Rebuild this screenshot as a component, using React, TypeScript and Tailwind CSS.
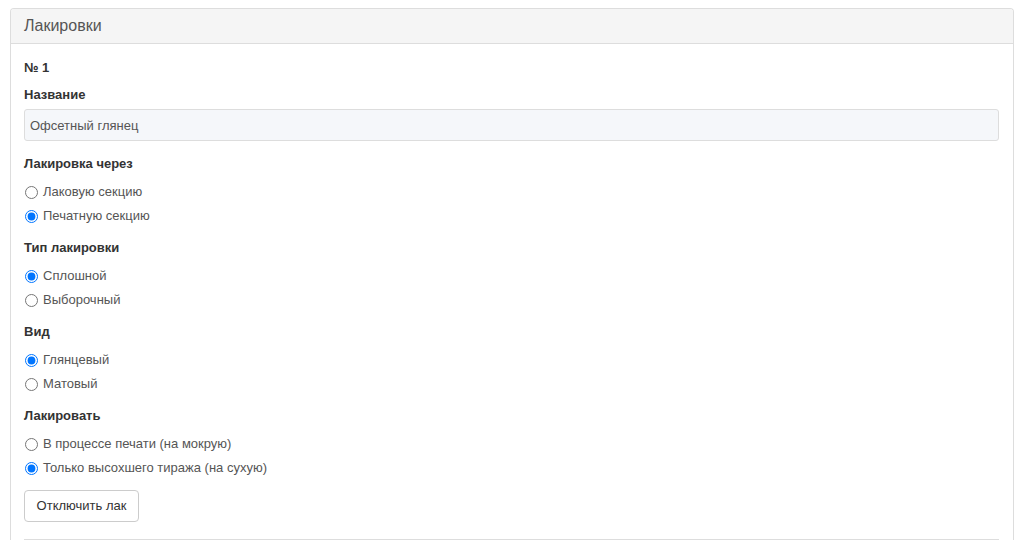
import React, { useState } from 'react';

type Option = { value: string; label: string };

interface RadioGroupProps {
  title: string;
  name: string;
  options: Option[];
  value: string;
  onChange: (v: string) => void;
}

// Группа радиокнопок с заголовком
const RadioGroup: React.FC<RadioGroupProps> = ({ title, name, options, value, onChange }) => (
  <div className="mt-[11px]">
    <div className="text-[13px] leading-[18px] font-bold text-[#333]">{title}</div>
    <div className="mt-[7px]">
      {options.map((o) => (
        <label key={o.value} className="flex items-center h-6 cursor-pointer">
          <input
            type="radio"
            name={name}
            checked={value === o.value}
            onChange={() => onChange(o.value)}
            className="m-0 ml-[1px] w-[13px] h-[13px] accent-[#0075ff]"
          />
          <span className="ml-[5px] text-[13px] text-[#555]">{o.label}</span>
        </label>
      ))}
    </div>
  </div>
);

export default function App() {
  const [via, setVia] = useState('print');
  const [type, setType] = useState('solid');
  const [kind, setKind] = useState('gloss');
  const [when, setWhen] = useState('dry');

  return (
    <div className="bg-white min-h-screen pt-2 px-[10px]" style={{ fontFamily: '"Liberation Sans", Arial, sans-serif' }}>
      <div className="border border-[#ddd] rounded-t-[4px] rounded-b-none border-b-0 w-[1004px]">
        <div className="bg-[#f5f5f5] border-b border-[#ddd] h-[35px] flex items-center px-[13px] rounded-t-[3px]">
          <h3 className="text-[16px] text-[#555]">Лакировки</h3>
        </div>

        <div className="px-[13px] pt-[15px]">
          <div className="text-[13px] leading-[18px] font-bold text-[#333]">№ 1</div>

          <div className="mt-[9px] text-[13px] leading-[18px] font-bold text-[#333]">Название</div>
          <input
            type="text"
            readOnly
            value="Офсетный глянец"
            className="mt-[5px] block w-[975px] h-[32px] px-[5px] bg-[#f5f7fa] border border-[#ddd] rounded-[3px] text-[13px] text-[#555] outline-none"
            style={{ fontFamily: '"Liberation Sans", Arial, sans-serif' }}
          />

          <div className="pt-[3px]">
            <RadioGroup
              title="Лакировка через"
              name="via"
              value={via}
              onChange={setVia}
              options={[
                { value: 'lac', label: 'Лаковую секцию' },
                { value: 'print', label: 'Печатную секцию' },
              ]}
            />
          </div>
          <RadioGroup
            title="Тип лакировки"
            name="type"
            value={type}
            onChange={setType}
            options={[
              { value: 'solid', label: 'Сплошной' },
              { value: 'spot', label: 'Выборочный' },
            ]}
          />
          <RadioGroup
            title="Вид"
            name="kind"
            value={kind}
            onChange={setKind}
            options={[
              { value: 'gloss', label: 'Глянцевый' },
              { value: 'matte', label: 'Матовый' },
            ]}
          />
          <RadioGroup
            title="Лакировать"
            name="when"
            value={when}
            onChange={setWhen}
            options={[
              { value: 'wet', label: 'В процессе печати (на мокрую)' },
              { value: 'dry', label: 'Только высохшего тиража (на сухую)' },
            ]}
          />

          <button
            type="button"
            className="mt-[10px] h-[32px] w-[115px] border border-[#ccc] rounded-[4px] bg-white text-[13px] text-[#333] hover:bg-[#e6e6e6]"
          >
            Отключить лак
          </button>

          <div className="mt-[17px] w-[975px] border-t border-[#ddd]" />
        </div>
      </div>
    </div>
  );
}
